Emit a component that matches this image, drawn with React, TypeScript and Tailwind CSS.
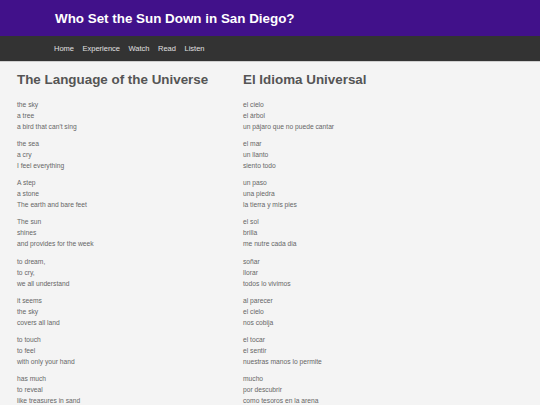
import React from "react";

const en: string[][] = [
  ["the sky", "a tree", "a bird that can't sing"],
  ["the sea", "a cry", "I feel everything"],
  ["A step", "a stone", "The earth and bare feet"],
  ["The sun", "shines", "and provides for the week"],
  ["to dream,", "to cry,", "we all understand"],
  ["it seems", "the sky", "covers all land"],
  ["to touch", "to feel", "with only your hand"],
  ["has much", "to reveal", "like treasures in sand"],
];

const es: string[][] = [
  ["el cielo", "el árbol", "un pájaro que no puede cantar"],
  ["el mar", "un llanto", "siento todo"],
  ["un paso", "una piedra", "la tierra y mis pies"],
  ["el sol", "brilla", "me nutre cada dia"],
  ["soñar", "llorar", "todos lo vivimos"],
  ["al parecer", "el cielo", "nos cobija"],
  ["el tocar", "el sentir", "nuestras manos lo permite"],
  ["mucho", "por descubrir", "como tesoros en la arena"],
];

function Poem({ title, stanzas }: { title: string; stanzas: string[][] }) {
  return (
    <div className="flex flex-col">
      <h2 className="text-[13.4px] leading-[16px] font-bold text-[#555]">{title}</h2>
      <div className="mt-[11px] flex flex-col gap-[6.15px]">
        {stanzas.map((s, i) => (
          <div key={i} className="flex flex-col">
            {s.map((l, j) => (
              <p key={j} className="text-[6.7px] leading-[11px] text-[#666] whitespace-nowrap">
                {l}
              </p>
            ))}
          </div>
        ))}
      </div>
    </div>
  );
}

export default function App() {
  return (
    <div
      className="min-h-[405px] bg-[#f4f4f4]"
      style={{ fontFamily: '"Liberation Sans", Arial, sans-serif' }}
    >
      <header className="h-[36px] bg-[#41118a] flex items-center pl-[55px] pt-[1px]">
        <h1 className="text-[13.4px] leading-[16px] font-bold text-white">
          Who Set the Sun Down in San Diego?
        </h1>
      </header>
      <nav className="h-[26px] bg-[#333333] border-b border-[#cfcfcf] flex items-center pl-[54px] pt-[1px] gap-[8.5px]">
        {["Home", "Experience", "Watch", "Read", "Listen"].map((n) => (
          <span key={n} className="text-[7.5px] leading-[10px] text-[#e0e0e0]">
            {n}
          </span>
        ))}
      </nav>
      <main className="grid grid-cols-[226px_1fr] pl-[17px] pt-[10px]">
        <Poem title="The Language of the Universe" stanzas={en} />
        <Poem title="El Idioma Universal" stanzas={es} />
      </main>
    </div>
  );
}
